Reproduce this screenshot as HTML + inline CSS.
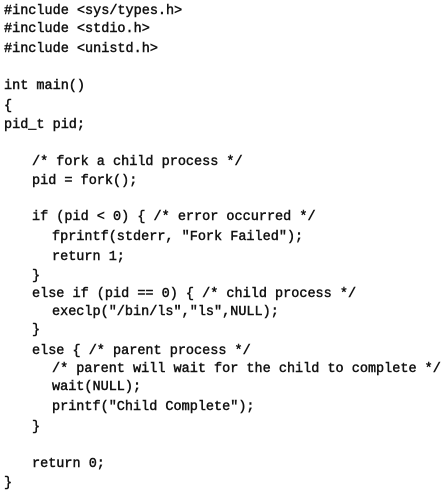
<!DOCTYPE html>
<html><head><meta charset="utf-8"><style>
html,body{margin:0;padding:0;background:#fff;width:447px;height:497px;overflow:hidden}
.l{position:absolute;height:18px;line-height:18px;white-space:pre;font-family:"Liberation Mono",monospace;font-size:13.5px;color:#111;-webkit-text-stroke:0.45px #111}
</style></head><body>
<div class="l" style="left:4px;top:3px">#include &lt;sys/types.h&gt;</div>
<div class="l" style="left:4px;top:21px">#include &lt;stdio.h&gt;</div>
<div class="l" style="left:4px;top:41px">#include &lt;unistd.h&gt;</div>
<div class="l" style="left:4px;top:78px">int main()</div>
<div class="l" style="left:4px;top:98px">{</div>
<div class="l" style="left:4px;top:117px">pid_t pid;</div>
<div class="l" style="left:32px;top:154px">/* fork a child process */</div>
<div class="l" style="left:32px;top:173px">pid = fork();</div>
<div class="l" style="left:32px;top:209px">if (pid &lt; 0) { /* error occurred */</div>
<div class="l" style="left:52px;top:229px">fprintf(stderr, "Fork Failed");</div>
<div class="l" style="left:52px;top:249px">return 1;</div>
<div class="l" style="left:32px;top:268px">}</div>
<div class="l" style="left:32px;top:286px">else if (pid == 0) { /* child process */</div>
<div class="l" style="left:52px;top:304px">execlp("/bin/ls","ls",NULL);</div>
<div class="l" style="left:32px;top:322px">}</div>
<div class="l" style="left:32px;top:343px">else { /* parent process */</div>
<div class="l" style="left:52px;top:361px">/* parent will wait for the child to complete */</div>
<div class="l" style="left:52px;top:379px">wait(NULL);</div>
<div class="l" style="left:52px;top:399px">printf("Child Complete");</div>
<div class="l" style="left:32px;top:419px">}</div>
<div class="l" style="left:32px;top:456px">return 0;</div>
<div class="l" style="left:4px;top:475px">}</div>
</body></html>
